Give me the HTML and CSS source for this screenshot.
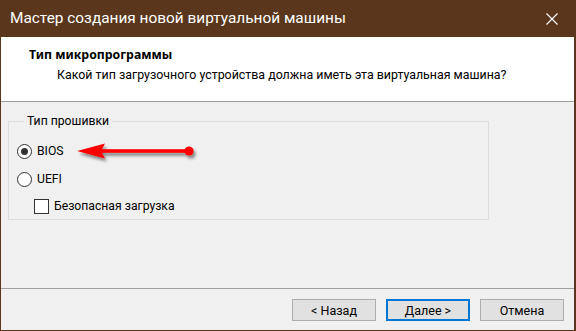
FILE: index.html
```html
<!DOCTYPE html>
<html lang="ru">
<head>
    <meta charset="UTF-8">
    <meta name="viewport" content="width=device-width, initial-scale=1.0">
    <title>Мастер создания новой виртуальной машины</title>
    <link rel="stylesheet" href="styles.css">
</head>
<body>
    <div class="window">
        <div class="titlebar">
            <span class="title">Мастер создания новой виртуальной машины</span>
            <span class="close">
                <svg width="12" height="12" viewBox="0 0 12 12">
                    <path d="M0.5 0.5 L11.5 11.5 M11.5 0.5 L0.5 11.5" stroke="#fff" stroke-width="1.1" fill="none"/>
                </svg>
            </span>
        </div>

        <div class="header">
            <div class="header-title">Тип микропрограммы</div>
            <div class="header-sub">Какой тип загрузочного устройства должна иметь эта виртуальная машина?</div>
        </div>
        <div class="sep"></div>

        <div class="content">
            <fieldset class="group">
                <legend>Тип прошивки</legend>
                <div class="row">
                    <span class="radio checked"></span>
                    <span class="label">BIOS</span>
                </div>
                <div class="row">
                    <span class="radio"></span>
                    <span class="label">UEFI</span>
                </div>
                <div class="row sub">
                    <span class="check"></span>
                    <span class="label">Безопасная загрузка</span>
                </div>
            </fieldset>

            <!-- red pointer drawn over the dialog -->
            <svg class="arrow" width="130" height="30" viewBox="70 136 130 30">
                <defs>
                    <filter id="shadow" x="-20%" y="-50%" width="140%" height="220%">
                        <feDropShadow dx="2" dy="3" stdDeviation="1.6" flood-color="#000" flood-opacity="0.45"/>
                    </filter>
                </defs>
                <g filter="url(#shadow)" fill="#f00">
                    <polygon points="77,151 105,143.5 101,151 105,158.5"/>
                    <rect x="100" y="149.2" width="89" height="3.6"/>
                    <circle cx="189" cy="151" r="4.6"/>
                </g>
            </svg>
        </div>
        <div class="sep"></div>

        <div class="footer">
            <button class="btn">&lt; Назад</button>
            <button class="btn default">Далее &gt;</button>
            <button class="btn">Отмена</button>
        </div>
    </div>
</body>
</html>
```

FILE: styles.css
```css
:root {
    --frame: #5a371c;
    --face: #f0f0f0;
    --line: #a0a0a0;
    --text: #000000;
}

* {
    margin: 0;
    padding: 0;
    box-sizing: border-box;
}

body {
    width: 576px;
    height: 331px;
    overflow: hidden;
    font-family: Roboto, 'Noto Sans', sans-serif;
    font-size: 12.2px;
    color: var(--text);
}

.window {
    position: relative;
    width: 576px;
    height: 331px;
    display: flex;
    flex-direction: column;
    background: var(--face);
    border-left: 1px solid var(--frame);
    border-right: 2px solid var(--frame);
    border-bottom: 1px solid var(--frame);
}

.titlebar {
    height: 37px;
    flex: none;
    display: flex;
    align-items: center;
    background: var(--frame);
    color: #fff;
    margin-left: -1px;
    margin-right: -2px;
    padding-left: 10px;
}

.title {
    font-size: 15.4px;
    padding-bottom: 1px;
}

.close {
    margin-left: auto;
    width: 46px;
    height: 37px;
    display: flex;
    align-items: center;
    justify-content: center;
    padding-right: 2px;
}

.header {
    height: 64px;
    flex: none;
    background: #fff;
    padding: 8px 0 0 28px;
    line-height: 20px;
}

.header-title {
    font-family: 'Noto Sans', Roboto, sans-serif;
    font-weight: bold;
    font-size: 12.3px;
}

.header-sub {
    padding-left: 28px;
    font-size: 12.4px;
}

.sep {
    height: 1px;
    flex: none;
    background: var(--line);
}

.content {
    height: 186px;
    flex: none;
    padding: 11px 0 0 7px;
}

.group {
    width: 481px;
    border: 1px solid #dcdcdc;
    padding: 12px 0 3px 8px;
}

.group legend {
    margin-left: 7px;
    padding: 0 3px;
    line-height: 16px;
}

.row {
    height: 20px;
    display: flex;
    align-items: center;
    gap: 5px;
}

.row + .row {
    margin-top: 8px;
}

.row.sub {
    margin-top: 7px;
    padding-left: 17px;
}

.radio {
    width: 15px;
    height: 15px;
    border: 1px solid #333;
    border-radius: 50%;
    background: #fff;
    display: flex;
    align-items: center;
    justify-content: center;
}

.radio.checked::after {
    content: '';
    width: 7px;
    height: 7px;
    border-radius: 50%;
    background: #333;
}

.check {
    width: 15px;
    height: 15px;
    border: 1px solid #333;
    background: #fff;
}

.arrow {
    position: absolute;
    left: 69px;
    top: 136px;
}

.footer {
    flex: 1;
    display: flex;
    justify-content: flex-end;
    gap: 10px;
    padding: 10px 10px 0 0;
}

.btn {
    width: 84px;
    height: 22px;
    border: 1px solid #adadad;
    background: #e1e1e1;
    font-family: inherit;
    font-size: 12.5px;
    color: var(--text);
}

.btn.default {
    border: 2px solid #0078d7;
}
```
